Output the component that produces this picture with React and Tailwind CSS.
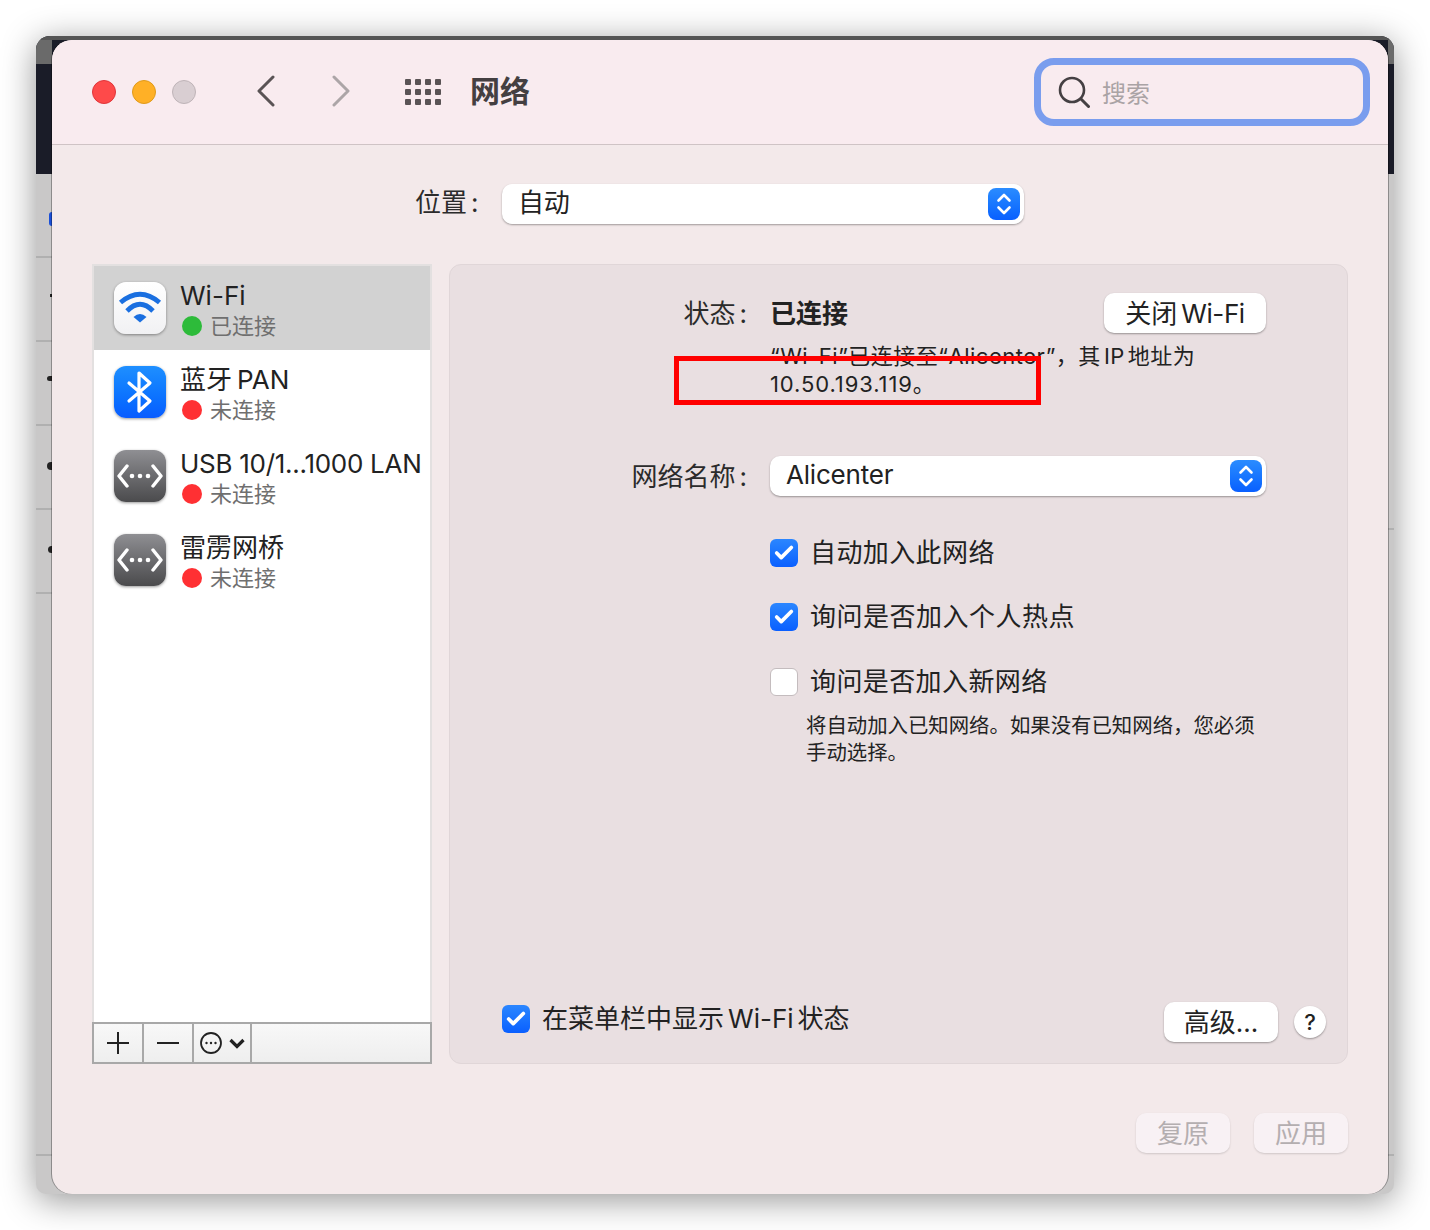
import { Check } from "lucide-react"

const font = { fontFamily: '"Inter", "Noto Sans CJK SC", sans-serif' }
const buttonStyle = "flex h-10 items-center justify-center rounded-[10px] bg-white text-[26px] text-[#222] shadow-[0_1px_2px_rgba(0,0,0,0.35)]"

function Stepper() {
  return (
    <span className="flex h-8 w-8 items-center justify-center rounded-lg bg-gradient-to-b from-[#2b8cff] to-[#0a5fff]">
      <svg width="20" height="28" viewBox="0 0 20 28" fill="none" stroke="white" strokeWidth="2.6" strokeLinecap="round" strokeLinejoin="round">
        <path d="M4.5 10.5 10 5l5.5 5.5" />
        <path d="M4.5 17.5 10 23l5.5-5.5" />
      </svg>
    </span>
  )
}

function Select({ label, className }) {
  return (
    <div className={"flex h-10 items-center justify-between rounded-[10px] bg-white pl-[16px] pr-1 text-[26px] text-[#222] shadow-[0_1px_2px_rgba(0,0,0,0.35)] " + className}>
      <span className="pb-[3px] tracking-[-0.2px]">{label}</span>
      <Stepper />
    </div>
  )
}

function WifiIcon() {
  return (
    <div className="flex h-[52px] w-[52px] items-center justify-center rounded-xl bg-gradient-to-b from-white to-[#f1f1f3] shadow-[0_1px_3px_rgba(0,0,0,0.4)]">
      <svg width="44" height="36" viewBox="0 0 44 36" fill="none" stroke="#1a6fe0" strokeWidth="4.8">
        <path d="M2.5 12.5Q22-4 41.5 12.5" />
        <path d="M9 21Q22 7.5 35 21" />
        <path d="M15.5 27Q22 21 28.5 27L22 32.5z" fill="#1a6fe0" stroke="none" />
      </svg>
    </div>
  )
}

function BluetoothIcon() {
  return (
    <div className="flex h-[52px] w-[52px] items-center justify-center rounded-xl bg-gradient-to-b from-[#1f8fff] to-[#0a5cff] shadow-[0_1px_3px_rgba(0,0,0,0.4)]">
      <svg width="30" height="44" viewBox="0 0 30 44" fill="none" stroke="white" strokeWidth="3.2" strokeLinecap="round" strokeLinejoin="round">
        <path d="M4 13 25 31 14 41V3l11 10L4 31" />
      </svg>
    </div>
  )
}

function LanIcon() {
  return (
    <div className="flex h-[52px] w-[52px] items-center justify-center rounded-xl bg-gradient-to-b from-[#8f8f93] to-[#4b4b4d] shadow-[0_1px_3px_rgba(0,0,0,0.4)]">
      <svg width="46" height="26" viewBox="0 0 46 26" fill="none" stroke="white" strokeWidth="3.4" strokeLinecap="round" strokeLinejoin="round">
        <path d="M10 3 2 13l8 10" />
        <path d="M36 3l8 10-8 10" />
        <circle cx="15" cy="13" r="2.3" fill="white" stroke="none" />
        <circle cx="23" cy="13" r="2.3" fill="white" stroke="none" />
        <circle cx="31" cy="13" r="2.3" fill="white" stroke="none" />
      </svg>
    </div>
  )
}

function NetRow({ icon, name, status, dot, selected }) {
  return (
    <div className={"flex h-[84px] items-center pl-[20px] " + (selected ? "bg-[#d2d2d2]" : "")}>
      {icon}
      <div className="ml-[14px] mt-[13px] flex flex-col self-start">
        <span className="h-[34px] text-[26px] leading-[34px] whitespace-nowrap text-[#222]">{name}</span>
        <span className="-mt-px flex h-[28px] items-center text-[22px] leading-[28px] text-[#6f6f6f]">
          <span className={"ml-0.5 mr-2 h-5 w-5 rounded-full " + dot}></span>
          {status}
        </span>
      </div>
    </div>
  )
}

function CheckRow({ label, checked, className, labelClass }) {
  return (
    <div className={"flex items-center " + className}>
      {checked ? (
        <span className="flex h-7 w-7 items-center justify-center rounded-md bg-gradient-to-b from-[#2b86ff] to-[#0a5fff]">
          <Check size={22} color="white" strokeWidth={4} />
        </span>
      ) : (
        <span className="h-7 w-7 rounded-md border border-[#c4bcbe] bg-white"></span>
      )}
      <span className={"ml-[12px] text-[26px] leading-[34px] whitespace-nowrap text-[#222] " + labelClass}>{label}</span>
    </div>
  )
}

function Field({ label, className, children }) {
  return (
    <div className={"flex items-center " + className}>
      <span className="w-[320px] pr-[23px] text-right text-[26px] whitespace-nowrap text-[#2b2b2b]">
        {label}<span className="ml-1">:</span>
      </span>
      {children}
    </div>
  )
}

function App() {
  return (
    <div className="h-[1230px] w-[1430px] overflow-hidden bg-white pl-9 pt-9" style={font}>
      {/* window behind */}
      <div className="relative h-[1158px] w-[1358px] rounded-t-[14px] rounded-b-[10px] bg-[#c9c8c8] shadow-[0_6px_34px_rgba(0,0,0,0.42)]">
        <div className="h-[138px] overflow-hidden rounded-t-[14px] bg-[#1a1c28]">
          <div className="h-1 bg-[#555555]"></div>
          <div className="flex justify-between">
            <span className="h-6 w-4 bg-[#6a6a6a]"></span>
            <span className="h-6 w-1.5 bg-[#6a6a6a]"></span>
          </div>
        </div>
        <div className="mt-[82px] h-0.5 w-4 bg-[#b0b0b0]"></div>
        <div className="mt-[82px] h-0.5 w-4 bg-[#b0b0b0]"></div>
        <div className="mt-[82px] h-0.5 w-4 bg-[#b0b0b0]"></div>
        <div className="mt-[82px] h-0.5 w-4 bg-[#b0b0b0]"></div>
        <div className="mt-[82px] h-0.5 w-4 bg-[#b0b0b0]"></div>
        <span className="absolute left-[13px] top-[176px] h-[14px] w-[3px] rounded-l bg-[#1a4fd8]"></span>
        <span className="absolute left-[14px] top-[258px] h-[3px] w-[2px] bg-[#222]"></span>
        <span className="absolute left-[11px] top-[340px] h-[5px] w-[5px] rounded-l-full bg-[#222]"></span>
        <span className="absolute left-[11px] top-[426px] h-[8px] w-[5px] rounded-l-full bg-[#222]"></span>
        <span className="absolute left-[12px] top-[510px] h-[7px] w-[4px] rounded-l-full bg-[#222]"></span>
        <span className="absolute left-0 top-[1118px] h-0.5 w-4 bg-[#b0b0b0]"></span>
        <span className="absolute right-0 top-[492px] h-0.5 w-1.5 bg-[#b0b0b0]"></span>
        <span className="absolute right-0 top-[1118px] h-0.5 w-1.5 bg-[#b0b0b0]"></span>

        {/* main window */}
        <div className="absolute left-4 top-1 flex h-[1154px] w-[1336px] flex-col overflow-hidden rounded-t-[20px] rounded-b-[20px] bg-[#f3e9ea] shadow-[-1px_0_0_rgba(0,0,0,0.3),1px_0_0_rgba(0,0,0,0.3)]">
          <div className="flex h-[105px] shrink-0 items-center border-b border-[#cfc3c5] bg-[#f9ebef] pl-10 pr-[18px]">
            <span className="h-6 w-6 rounded-full border border-[#e0353a] bg-[#fe4a4a]"></span>
            <span className="ml-4 h-6 w-6 rounded-full border border-[#e09a1a] bg-[#ffb026]"></span>
            <span className="ml-4 h-6 w-6 rounded-full border border-[#bfb4b8] bg-[#d9ced2]"></span>
            <svg className="ml-[60px] mb-0.5" width="20" height="32" viewBox="0 0 20 32" fill="none" stroke="#5a5355" strokeWidth="3" strokeLinecap="round" strokeLinejoin="round">
              <path d="M17 2 3 16l14 14" />
            </svg>
            <svg className="ml-[55px] mb-0.5" width="20" height="32" viewBox="0 0 20 32" fill="none" stroke="#aca5a7" strokeWidth="3" strokeLinecap="round" strokeLinejoin="round">
              <path d="M3 2l14 14L3 30" />
            </svg>
            <div className="ml-[54px] grid grid-cols-4 gap-x-[4px] gap-y-[4px]">
              {Array.from({ length: 12 }).map((_, i) => (
                <span key={i} className="h-[6px] w-[6px] rounded-[1px] bg-[#5a5355]"></span>
              ))}
            </div>
            <span className="ml-[29px] pb-[3px] text-[30px] leading-none font-bold text-[#443f41]">网络</span>
            <div className="ml-auto flex h-[68px] w-[336px] items-center rounded-[20px] border-[7px] border-[#7a9dee] pl-[17px]">
              <svg width="32" height="32" viewBox="0 0 32 32" fill="none" stroke="#454043" strokeWidth="2.6" strokeLinecap="round">
                <circle cx="14" cy="14" r="12" />
                <path d="M23 23l7.5 7.5" strokeWidth="3" />
              </svg>
              <span className="ml-3 pt-[4px] text-2xl text-[#aaa3a5]">搜索</span>
            </div>
          </div>

          <div className="flex items-center pl-[363px] pt-[39px]">
            <span className="h-10 w-[87px] text-[26px] leading-[37px] whitespace-nowrap text-[#2b2b2b]">位置<span className="ml-1">:</span></span>
            <Select label="自动" className="w-[522px]" />
          </div>

          <div className="flex gap-[17px] px-10 pt-[40px]">
            <div className="flex h-[800px] w-[340px] flex-col border-x-2 border-t-2 border-[#e3e0e0] bg-white">
              <div className="flex-1">
                <NetRow selected icon={<WifiIcon />} name="Wi-Fi" status="已连接" dot="bg-[#2dbb3a]" />
                <NetRow icon={<BluetoothIcon />} name={<>蓝牙<span className="ml-[5px]">PAN</span></>} status="未连接" dot="bg-[#ff3033]" />
                <NetRow icon={<LanIcon />} name={<span className="tracking-[-0.28px]">USB 10/1...1000 LAN</span>} status="未连接" dot="bg-[#ff3033]" />
                <NetRow icon={<LanIcon />} name="雷雳网桥" status="未连接" dot="bg-[#ff3033]" />
              </div>
              <div className="-mx-0.5 flex h-[42px] border-2 border-[#a8a8a8] bg-gradient-to-b from-[#f8f8f8] to-[#eeeeee]">
                <div className="flex w-[50px] items-center justify-center border-r-2 border-[#a8a8a8]">
                  <svg width="22" height="22" viewBox="0 0 22 22" stroke="#222" strokeWidth="2"><path d="M0 11h22M11 0v22" /></svg>
                </div>
                <div className="flex w-[50px] items-center justify-center border-r-2 border-[#a8a8a8]">
                  <svg width="22" height="22" viewBox="0 0 22 22" stroke="#222" strokeWidth="2"><path d="M0 11h22" /></svg>
                </div>
                <div className="flex w-[58px] items-center justify-center gap-[7px] border-r-2 border-[#a8a8a8]">
                  <svg width="22" height="22" viewBox="0 0 22 22" fill="none" stroke="#222" strokeWidth="1.8">
                    <circle cx="11" cy="11" r="10" />
                    <circle cx="6.5" cy="11" r="1.2" fill="#222" stroke="none" />
                    <circle cx="11" cy="11" r="1.2" fill="#222" stroke="none" />
                    <circle cx="15.5" cy="11" r="1.2" fill="#222" stroke="none" />
                  </svg>
                  <svg width="16" height="11" viewBox="0 0 16 11" fill="none" stroke="#222" strokeWidth="3.2"><path d="M1.5 2 8 8.5 14.5 2" /></svg>
                </div>
              </div>
            </div>

            <div className="relative h-[800px] w-[899px] rounded-xl border border-[#e0d6d8] bg-[#e9dfe1]">
              <Field label="状态" className="mt-[28px] h-10 pr-[81px]">
                <span className="text-[26px] font-semibold text-[#222]">已连接</span>
                <span className={"ml-auto w-[162px] " + buttonStyle}>关闭<span className="ml-[4px] tracking-[-0.4px]">Wi-Fi</span></span>
              </Field>
              <p className="ml-[320px] mt-[9px] w-[440px] text-[22px] leading-[28px] tracking-[0.5px] text-[#222]">
                {"“Wi-Fi”已连接至“Alicenter”\uFF0C其"}<span className="mx-[3px]">IP</span>地址为 <span className="tracking-[0.9px]">10.50.193.119。</span>
              </p>
              <Field label="网络名称" className="mt-[58px]">
                <Select label="Alicenter" className="w-[496px]" />
              </Field>
              <CheckRow checked label="自动加入此网络" labelClass="tracking-[0.4px]" className="ml-[320px] mt-[40px]" />
              <CheckRow checked label="询问是否加入个人热点" labelClass="tracking-[0.5px]" className="ml-[320px] mt-[30px]" />
              <CheckRow label="询问是否加入新网络" labelClass="tracking-[0.4px]" className="ml-[320px] mt-[31px]" />
              <p className="ml-[356px] mt-[13px] w-[456px] text-[20.4px] leading-[27px] text-[#222]">{"将自动加入已知网络。如果没有已知网络\uFF0C您必须手动选择。"}</p>

              <div className="absolute left-[52px] right-[53px] bottom-[21px] flex h-10 items-center">
                <CheckRow checked className="-mt-[6px]" label={<>在菜单栏中显示<span className="mx-[4px]">Wi-Fi</span>状态</>} />
                <span className={"ml-auto w-[114px] " + buttonStyle}>高级...</span>
                <span className="ml-[16px] mr-[-32px] flex h-[32px] w-[32px] items-center justify-center rounded-full bg-white text-[22px] font-medium text-[#222] shadow-[0_1px_2px_rgba(0,0,0,0.35)]">?</span>
              </div>
            </div>
          </div>

          <div className="flex justify-end gap-6 pr-10 pt-[49px]">
            <span className="flex h-10 w-[94px] items-center justify-center rounded-[10px] bg-[#f8f1f4] text-[26px] text-[#b4aeb0] shadow-[0_1px_2px_rgba(0,0,0,0.15)]">复原</span>
            <span className="flex h-10 w-[94px] items-center justify-center rounded-[10px] bg-[#f8f1f4] text-[26px] text-[#b4aeb0] shadow-[0_1px_2px_rgba(0,0,0,0.15)]">应用</span>
          </div>
        </div>

        {/* red annotation box */}
        <div className="absolute left-[638px] top-[320px] h-[49px] w-[367px] border-[5px] border-[#ff0000]"></div>
      </div>
    </div>
  )
}

export default App
